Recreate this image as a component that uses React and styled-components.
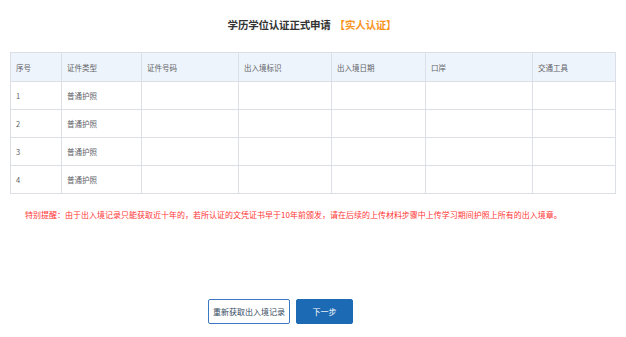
import styled, { createGlobalStyle } from "styled-components";

const GlobalStyle = createGlobalStyle`
  html, body {
    margin: 0;
    padding: 0;
    background: #ffffff;
  }
  body {
    font-family: "Noto Sans CJK SC", "Liberation Sans", sans-serif;
  }
`;

const Page = styled.div`
  width: 626px;
  height: 337px;
  padding: 0 12px 0 10px;
  box-sizing: border-box;
  display: flex;
  flex-direction: column;
  overflow: hidden;
`;

const Title = styled.h1`
  margin: 0;
  padding-top: 17px;
  height: 52px;
  flex-shrink: 0;
  box-sizing: border-box;
  font-size: 10.5px;
  font-weight: 700;
  color: #333333;
  text-align: center;
  line-height: 16px;
  letter-spacing: -0.2px;
`;

const Tag = styled.span`
  color: #f7941d;
  margin-left: 4px;
`;

const Table = styled.table`
  width: 605px;
  border-collapse: collapse;
  table-layout: fixed;
  border: 1px solid #dcdfe6;
  flex-shrink: 0;
`;

const Col = styled.col`
  width: ${(p) => p.w}px;
`;

const HeadCell = styled.th`
  height: 28px;
  padding: 0 0 0 5px;
  text-align: left;
  font-size: 7.5px;
  font-weight: 400;
  color: #606266;
  background: #eef4fb;
  border: 1px solid #dcdfe6;
`;

const Cell = styled.td`
  height: 27px;
  padding: 0 0 0 5px;
  font-size: 7.5px;
  color: #606266;
  border: 1px solid #dcdfe6;
`;

const Notice = styled.p`
  margin: 15px 0 0 15px;
  font-size: 8px;
  line-height: 12px;
  color: #ff3535;
`;

const Actions = styled.div`
  display: flex;
  gap: 6px;
  margin: 78px 0 0 198px;
`;

const Button = styled.button`
  height: 25px;
  width: ${(p) => (p.primary ? "57px" : "82px")};
  padding: 0;
  box-sizing: border-box;
  font-family: inherit;
  font-size: 8px;
  border-radius: 2px;
  cursor: pointer;
  border: 1px solid ${(p) => (p.primary ? "#1d6ab4" : "#3a78c2")};
  background: ${(p) => (p.primary ? "#1d6ab4" : "#ffffff")};
  color: ${(p) => (p.primary ? "#ffffff" : "#34495e")};
`;

const columns = [
  { label: "序号", w: 51 },
  { label: "证件类型", w: 80 },
  { label: "证件号码", w: 97 },
  { label: "出入境标识", w: 93 },
  { label: "出入境日期", w: 94 },
  { label: "口岸", w: 107 },
  { label: "交通工具", w: 83 },
];

const rows = [1, 2, 3, 4];

const App = () => {
  return (
    <Page>
      <GlobalStyle />
      <Title>
        学历学位认证正式申请<Tag>【实人认证】</Tag>
      </Title>
      <Table>
        <colgroup>
          {columns.map((c) => (
            <Col key={c.label} w={c.w} />
          ))}
        </colgroup>
        <thead>
          <tr>
            {columns.map((c) => (
              <HeadCell key={c.label}>{c.label}</HeadCell>
            ))}
          </tr>
        </thead>
        <tbody>
          {rows.map((n) => (
            <tr key={n}>
              <Cell>{n}</Cell>
              <Cell>普通护照</Cell>
              <Cell />
              <Cell />
              <Cell />
              <Cell />
              <Cell />
            </tr>
          ))}
        </tbody>
      </Table>
      <Notice>
        特别提醒：由于出入境记录只能获取近十年的，若所认证的文凭证书早于10年前颁发，请在后续的上传材料步骤中上传学习期间护照上所有的出入境章。
      </Notice>
      <Actions>
        <Button>重新获取出入境记录</Button>
        <Button primary>下一步</Button>
      </Actions>
    </Page>
  );
};

export default App;
